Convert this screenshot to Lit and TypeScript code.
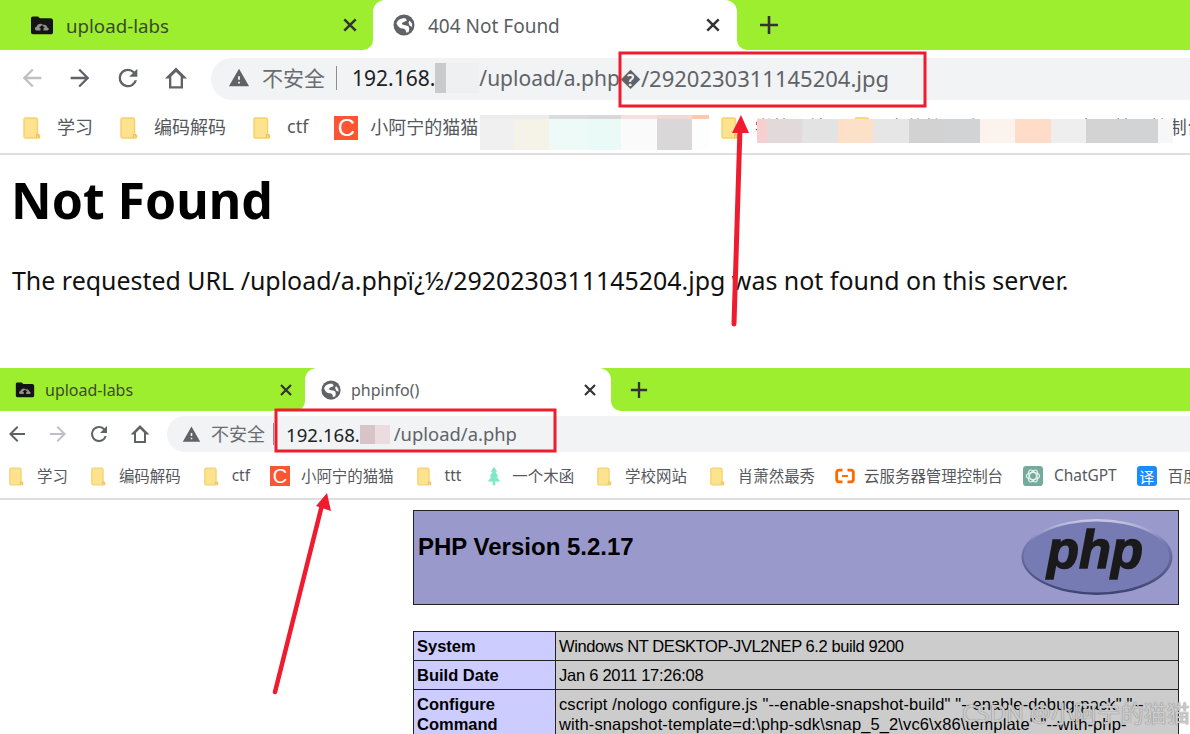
import { LitElement, html, css, svg } from "lit";
import { customElement } from "lit/decorators.js";

const back = svg`<path d="M20 11H7.83l5.59-5.59L12 4l-8 8 8 8 1.41-1.41L7.83 13H20v-2z"/>`;
const forward = svg`<path d="M4 11h12.17l-5.59-5.59L12 4l8 8-8 8-1.41-1.41L16.17 13H4v-2z"/>`;
const reload = svg`<path d="M17.65 6.35A7.96 7.96 0 0 0 12 4a8 8 0 1 0 7.73 10h-2.08A6 6 0 1 1 12 6c1.66 0 3.14.69 4.22 1.78L13 11h7V4l-2.35 2.35z"/>`;
const home = svg`<path d="M12 3 2.5 12.5H6V21h12v-8.5h3.5L12 3zm4 16H8v-8.2l4-4 4 4V19z"/>`;
const warn = svg`<path d="M1 21h22L12 2 1 21zm12-3h-2v-2h2v2zm0-4h-2v-4h2v4z"/>`;
const globe = svg`<circle cx="12" cy="12" r="10.500"/><path fill="#fff" d="M4.500 10.500C5 7 9 4.800 13.500 5.200L15 7.500C13 9 10.500 8.800 9.800 10.500 10 12.500 13.500 11.800 16 13c1.500 1 1.500 3.500.5 6.200L14 19.500c.2-2.500-1-3.800-3.500-4C8 15.300 6 14 4.500 10.500zM17.500 7.500L20 10.500l.2 3.500-2.700-1.500-1-3z"/>`;

const labsIcon = html`<svg class="labs" viewBox="0 0 24 20"><path fill="#141414" d="M1 3.500C1 2.300 1.800 1.500 3 1.500h5l2 1.800h10.500c1.500 0 2.500 1 2.500 2.200v12c0 1-1 1.800-2 1.800H3c-1.200 0-2-.8-2-2V3.500z"/><path fill="#8f8f8f" d="M6.500 15.500c-1.800-.2-2.400-3 0-3.700C7.300 8.800 11 8 13 9.800c2.600-.6 4.300 1.200 4.200 2.700 2.400.5 2 3-.2 3h-3.500v-2.500h1.500L12 10l-3 3h1.500v2.500h-4z"/></svg>`;

const folder = html`<svg class="folder" viewBox="0 0 18 22"><path fill="#fee38f" stroke="#f7d070" stroke-width="1.500" d="M1 2.500C1 1.500 1.700 1 2.500 1h10c1.500 0 2 1 2 2v15.500h2V20c0 .6-.5 1-1 1h-13c-.8 0-1.500-.6-1.500-1.500v-17z"/><path fill="none" stroke="#e9c25c" d="M13.500 21v-3.500h2.500V21"/></svg>`;

const cIcon = html`<span class="csdn">C</span>`;
const tree = html`<svg class="fav tree" viewBox="0 0 20 24"><path fill="#7fe8c8" d="M10 1l4 6h-2.500l4 5.500H13l4.500 6h-6V23h-3v-4.500h-6l4.500-6H4.500l4-5.500H6l4-6z"/></svg>`;
const ali = html`<svg class="fav ali" viewBox="0 0 24 20"><path fill="none" stroke="#ff6a00" stroke-width="3.400" d="M9 3H5c-1.800 0-3 1.200-3 3v8c0 1.800 1.200 3 3 3h4M15 3h4c1.800 0 3 1.200 3 3v8c0 1.800-1.200 3-3 3h-4"/><path stroke="#ff6a00" stroke-width="2.400" d="M8.500 10h7"/></svg>`;
const gpt = html`<svg class="fav" viewBox="0 0 24 24"><rect width="24" height="24" rx="4" fill="#74aa9c"/><g fill="none" stroke="#e9f4f1" stroke-width="1.300"><ellipse cx="12" cy="12" rx="8" ry="4.200"/><ellipse cx="12" cy="12" rx="8" ry="4.200" transform="rotate(60 12 12)"/><ellipse cx="12" cy="12" rx="8" ry="4.200" transform="rotate(120 12 12)"/></g></svg>`;
const yi = html`<span class="yi">译</span>`;

type Bm = { icon: unknown; label: string; tight?: boolean };

const topMarks: Bm[] = [
  { icon: folder, label: "学习" },
  { icon: folder, label: "编码解码" },
  { icon: folder, label: "ctf" },
  { icon: cIcon, label: "小阿宁的猫猫", tight: true },
  { icon: folder, label: "ttt" },
  { icon: tree, label: "一个木函" },
  { icon: folder, label: "学校网站" },
  { icon: folder, label: "肖萧然最秀" },
  { icon: ali, label: "云服务器管理控制台" },
];
const lowMarks: Bm[] = [
  { icon: folder, label: "学习" },
  { icon: folder, label: "编码解码" },
  { icon: folder, label: "ctf" },
  { icon: cIcon, label: "小阿宁的猫猫", tight: true },
  { icon: folder, label: "ttt" },
  { icon: tree, label: "一个木函" },
  { icon: folder, label: "学校网站" },
  { icon: folder, label: "肖萧然最秀" },
  { icon: ali, label: "云服务器管理控制台" },
  { icon: gpt, label: "ChatGPT", tight: true },
  { icon: yi, label: "百度翻译", tight: true },
];

const mosaicACells = [
  { w: 34, c: "#f0f0f0", t: "#ececec" },
  { w: 35, c: "#f5f2e8", t: "#ececec" },
  { w: 38, c: "#eefaf7", t: "#dcdcdc" },
  { w: 34, c: "#eafaf7", t: "#d8d8d8" },
  { w: 36, c: "#fafafa", t: "#f8e0e0" },
  { w: 35, c: "#d9d7d8", t: "#f3d8d8" },
  { w: 17, c: "#fdfdfd", t: "#fcc8b0" },
];
const mosaicBCells = [
  { w: 10, c: "#f8cfcf" }, { w: 35, c: "#e2d9da" }, { w: 36, c: "#e3e3e3" }, { w: 35, c: "#fce0c8" },
  { w: 36, c: "#e6e6e6" }, { w: 35, c: "#d2d2d2" }, { w: 36, c: "#d2d3d5" }, { w: 35, c: "#fdf3ee" },
  { w: 36, c: "#ffdcc8" }, { w: 35, c: "#eeeeee" }, { w: 36, c: "#d3d3d3" }, { w: 36, c: "#d2d3d4" },
  { w: 15, c: "#f7f7f7" },
];

@customElement("app-root")
export class AppRoot extends LitElement {
  static styles = css`
    :host {
      display: block;
      position: relative;
      width: 1190px;
      height: 734px;
      overflow: hidden;
      background: #fff;
      font-family: "Noto Sans", "Noto Sans CJK SC", sans-serif;
      color: #000;
    }
    .win { display: block; overflow: hidden; }
    .strip { display: flex; background: #fff; }
    .tab-off, .tab-fill { background: #9cee2e; display: flex; align-items: center; }
    .tab-off { border-bottom-right-radius: 10px; color: #3d4a2a; }
    .tab-fill { flex: 1; border-bottom-left-radius: 10px; }
    .tab-wrap { background: linear-gradient(#9cee2e 50%, #fff 50%); display: flex; }
    .tab-on { flex: 1; background: #fff; border-radius: 12px 12px 0 0; display: flex; align-items: center; color: #5a5d61; }
    .title { flex: 1; white-space: nowrap; }
    .x { color: #333; line-height: 0; }
    .x svg { display: block; }
    .plus { color: #333; line-height: 0; }
    svg.ic { display: block; fill: #5f6368; flex: none; }
    svg.ic.off { fill: #bdc1c6; }
    .labs { display: block; flex: none; }

    .bar { display: flex; align-items: center; background: #fff; }
    .nav { display: flex; align-items: center; justify-content: center; }
    .omni { flex: 1; box-sizing: border-box; display: flex; align-items: center; background: #f1f3f4; border-radius: 99px 0 0 99px; white-space: nowrap; color: #5f6368; position: relative; }
    .insecure { color: #6a6d70; padding-bottom: 2px; }
    .sep { width: 1px; background: #8b8e91; }
    .host { color: #202124; }
    .blur { display: inline-block; }
    .blur.a { background: linear-gradient(90deg, #c8cacc 0 25%, #eef0f1 25%); }
    .blur.b { background: linear-gradient(90deg, #d8c3c8 0 50%, #ecdcdf 50%); }

    .marks { display: flex; align-items: center; background: #fff; white-space: nowrap; overflow: hidden; color: #55585c; border-bottom: 2px solid #dedede; position: relative; }
    .mark { display: flex; align-items: center; flex: none; }
    .folder { display: block; flex: none; }
    .fav { display: block; flex: none; }
    .csdn { display: flex; align-items: center; justify-content: center; background: #fc5531; color: #fff; flex: none; font-family: "Liberation Sans", sans-serif; }
    .yi { display: flex; align-items: center; justify-content: center; background: #1a8cff; color: #fff; border-radius: 3px; flex: none; }
    .mosaic { position: absolute; display: flex; }
    .mosaic i { display: block; box-sizing: border-box; border-top: 4px solid transparent; }

    /* top window */
    .big .tab-off { width: 373px; height: 50px; box-sizing: border-box; padding: 0 15px 0 30px; gap: 12px; font-size: 18.700px; }
    .big .tab-wrap { width: 364px; }
    .big .tab-on { padding: 0 16px 0 18px; gap: 11px; font-size: 19px; }
    .big .tab-on .title { padding-top: 1px; }
    .big .labs { width: 24px; height: 20px; }
    .big .tab-on .ic { width: 24px; height: 24px; margin: 0 1px; }
    .big .x svg { width: 16px; height: 16px; }
    .big .tab-fill { padding-left: 22px; }
    .big .plus svg { width: 20px; height: 20px; }
    .big .bar { height: 56px; padding-left: 12px; }
    .big .nav { width: 40px; margin-right: 8px; }
    .big .nav .ic { width: 28px; height: 28px; }
    .big .omni { height: 42px; margin-left: 7px; padding: 0 0 2px 17px; font-size: 21px; margin-top: 1px; }
    .big .omni .ic { width: 22px; height: 22px; margin-right: 12px; }
    .big .sep { height: 24px; margin: 0 15px 0 11px; }
    .big .blur { width: 44px; height: 30px; }
    .big .tail { font-size: 22px; }
    .big .marks { height: 43px; padding: 0 0 4px 23px; font-size: 18px; gap: 27px; }
    .big .mark { gap: 16px; }
    .big .mark > span:last-child { padding-bottom: 4px; }
    .big .mark.tight { gap: 12px; margin-left: -1px; }
    .big .folder { width: 18px; height: 22px; }
    .big .fav { width: 22px; height: 22px; }
    .big .tree { margin-right: -2px; }
    .big .csdn { width: 24px; height: 24px; font-size: 24px; }

    .page-a { height: 213px; box-sizing: border-box; padding: 10px 0 0 11px; }
    .page-a h1 { margin: 0; font-size: 50px; line-height: 70px; font-weight: 700; }
    .page-a p { margin: 28px 0 0 1px; font-size: 24.950px; line-height: 34px; white-space: nowrap; color: #111; }

    /* bottom window */
    .small .tab-off { width: 305px; height: 43px; box-sizing: border-box; padding: 0 12px 0 15px; gap: 10px; font-size: 16px; }
    .small .tab-wrap { width: 306px; }
    .small .tab-on { padding: 0 14px 0 15px; gap: 9px; font-size: 16px; }
    .small .labs { width: 20px; height: 17px; }
    .small .tab-on .ic { width: 22px; height: 22px; }
    .small .x svg { width: 14px; height: 14px; }
    .small .tab-fill { padding-left: 19px; }
    .small .plus svg { width: 18px; height: 18px; }
    .small .bar { height: 45px; }
    .small .nav { width: 33px; margin-right: 8px; }
    .small .nav .ic { width: 24px; height: 24px; }
    .small .omni { height: 36px; margin-left: 3px; padding-left: 15px; font-size: 18px; margin-top: 1px; }
    .small .omni .ic { width: 19px; height: 19px; margin-right: 10px; }
    .small .sep { height: 22px; margin: 0 12px 0 8px; }
    .small .host { font-size: 18.600px; }
    .small .blur { width: 30px; height: 19px; margin-right: 4px; }
    .small .path { font-size: 18.400px; padding-bottom: 1px; }
    .small .marks { height: 40px; padding: 0 0 2px 9px; font-size: 15.450px; gap: 23px; }
    .small .mark { gap: 13px; }
    .small .mark > span:last-child { padding-bottom: 2px; }
    .small .mark.tight { gap: 11px; margin-left: -3px; }
    .small .folder { width: 15px; height: 19px; }
    .small .fav { width: 20px; height: 20px; }
    .small .tree { margin-right: -5px; }
    .small .ali { margin: 0 -4px 0 -3px; }
    .small .csdn { width: 20px; height: 20px; font-size: 20px; }
    .small .yi { width: 20px; height: 20px; font-size: 15px; }

    .page-b { padding: 10px 11px 0 413px; font-family: "Liberation Sans", sans-serif; }
    .banner { height: 95px; box-sizing: border-box; background: #9999cc; border: 1px solid #222; display: flex; justify-content: space-between; padding: 18px 5px 0 4px; }
    .banner h2 { margin: 0; font-size: 24px; line-height: 36px; font-weight: 700; white-space: nowrap; }
    .logo { display: block; width: 152px; height: 78px; margin-top: -11px; }
    table { border-collapse: collapse; width: 766px; margin-top: 26px; table-layout: fixed; }
    td { border: 1px solid #222; padding: 0 3px; font-size: 16.500px; line-height: 20px; height: 29px; white-space: nowrap; overflow: hidden; background: #ccc; box-sizing: border-box; }
    td.k { width: 142px; background: #ccccff; font-weight: 700; }
    td.tall { height: 60px; padding-top: 4px; vertical-align: top; }
    .r1 { letter-spacing: -.41px; }
    .r2 { letter-spacing: -.26px; }
    .r3 { letter-spacing: .12px; }
    .wm { position: absolute; right: 0; bottom: 6px; font-size: 23.200px; line-height: 30px; color: rgba(235,235,235,.7); text-shadow: 0 0 1px #888, 0 0 1px #888; white-space: nowrap; }
    .notes { position: absolute; left: 0; top: 0; width: 1190px; height: 734px; pointer-events: none; }
  `;

  private ic(p: unknown, off = false) {
    return html`<svg class="ic ${off ? "off" : ""}" viewBox="0 0 24 24">${p}</svg>`;
  }

  private chrome(kind: string, title: string, backOff: boolean, forwardOff: boolean, omni: unknown, marks: Bm[], mosaics: unknown) {
    const x = html`<span class="x"><svg viewBox="0 0 14 14"><path d="M2 2l10 10M12 2L2 12" stroke="currentColor" stroke-width="2.200"/></svg></span>`;
    return html`<div class="win ${kind}">
      <div class="strip">
        <div class="tab-off">${labsIcon}<span class="title">upload-labs</span>${x}</div>
        <div class="tab-wrap"><div class="tab-on">${this.ic(globe)}<span class="title">${title}</span>${x}</div></div>
        <div class="tab-fill"><span class="plus"><svg viewBox="0 0 20 20"><path d="M10 1v18M1 10h18" stroke="currentColor" stroke-width="2.600"/></svg></span></div>
      </div>
      <div class="bar">
        <span class="nav">${this.ic(back, backOff)}</span>
        <span class="nav">${this.ic(forward, forwardOff)}</span>
        <span class="nav">${this.ic(reload)}</span>
        <span class="nav">${this.ic(home)}</span>
        <div class="omni">${this.ic(warn)}<span class="insecure">不安全</span><span class="sep"></span>${omni}</div>
      </div>
      <div class="marks">
        ${marks.map((m) => html`<span class="mark ${m.tight ? "tight" : ""}">${m.icon}<span>${m.label}</span></span>`)}
        ${mosaics}
      </div>
    </div>`;
  }

  render() {
    const mosaicA = html`<div class="mosaic" style="left:480px;top:9px;height:35px">${mosaicACells.map((m) => html`<i style="width:${m.w}px;background:${m.c};border-top-color:${m.t}"></i>`)}</div>`;
    const mosaicB = html`<div class="mosaic" style="left:757px;top:13px;height:24px">${mosaicBCells.map((m) => html`<i style="width:${m.w}px;background:${m.c};border-top-color:${m.c}"></i>`)}</div>`;
    return html`
      ${this.chrome(
        "big", "404 Not Found", true, false,
        html`<span class="host">192.168.</span><span class="blur a"></span><span>/upload/a.php�</span><span class="tail">/2920230311145204.jpg</span>`,
        topMarks, html`${mosaicA}${mosaicB}`
      )}
      <div class="page-a">
        <h1>Not Found</h1>
        <p>The requested URL /upload/a.phpï¿½/2920230311145204.jpg was not found on this server.</p>
      </div>
      ${this.chrome(
        "small", "phpinfo()", false, true,
        html`<span class="host">192.168.</span><span class="blur b"></span><span class="path">/upload/a.php</span>`,
        lowMarks, ""
      )}
      <div class="page-b">
        <div class="banner">
          <h2>PHP Version 5.2.17</h2>
          <svg class="logo" viewBox="0 0 152 78">
            <defs>
              <linearGradient id="rim" x1="0" y1="0" x2="0" y2="1">
                <stop offset="0" stop-color="#c9cbe6"/><stop offset=".3" stop-color="#777bb4"/><stop offset="1" stop-color="#3e4170"/>
              </linearGradient>
            </defs>
            <ellipse cx="76" cy="39" rx="75.500" ry="38" fill="url(#rim)"/>
            <ellipse cx="75.500" cy="39" rx="73" ry="35.500" fill="#777bb4"/>
            <text x="74" y="50" text-anchor="middle" textLength="96" lengthAdjust="spacingAndGlyphs" font-family="Liberation Sans" font-weight="700" font-style="italic" font-size="54" fill="#1a1a1a" stroke="#1a1a1a" stroke-width="1.500">php</text>
          </svg>
        </div>
        <table>
          <tr><td class="k">System</td><td class="r1">Windows NT DESKTOP-JVL2NEP 6.2 build 9200</td></tr>
          <tr><td class="k">Build Date</td><td class="r2">Jan 6 2011 17:26:08</td></tr>
          <tr><td class="k tall">Configure<br />Command</td><td class="tall r3">cscript /nologo configure.js "--enable-snapshot-build" "--enable-debug-pack" "--<br />with-snapshot-template=d:\\php-sdk\\snap_5_2\\vc6\\x86\\template" "--with-php-</td></tr>
        </table>
      </div>
      <svg class="notes" viewBox="0 0 1190 734">
        <rect x="620" y="53" width="305" height="53" fill="none" stroke="#ee1c2e" stroke-width="3"/>
        <rect x="276" y="410" width="279" height="41" fill="none" stroke="#ee1c2e" stroke-width="3"/>
        <path d="M734 324 L740 128" stroke="#ee1c2e" stroke-width="5" stroke-linecap="round" fill="none"/>
        <path d="M741 115 L749 133 L732 133 Z" fill="#ee1c2e"/>
        <path d="M275 692 L322 505" stroke="#ee1c2e" stroke-width="4.500" stroke-linecap="round" fill="none"/>
        <path d="M327 493 L331 511 L316 506 Z" fill="#ee1c2e"/>
      </svg>
      <div class="wm">CSDN @小阿宁的猫猫</div>
    `;
  }
}
